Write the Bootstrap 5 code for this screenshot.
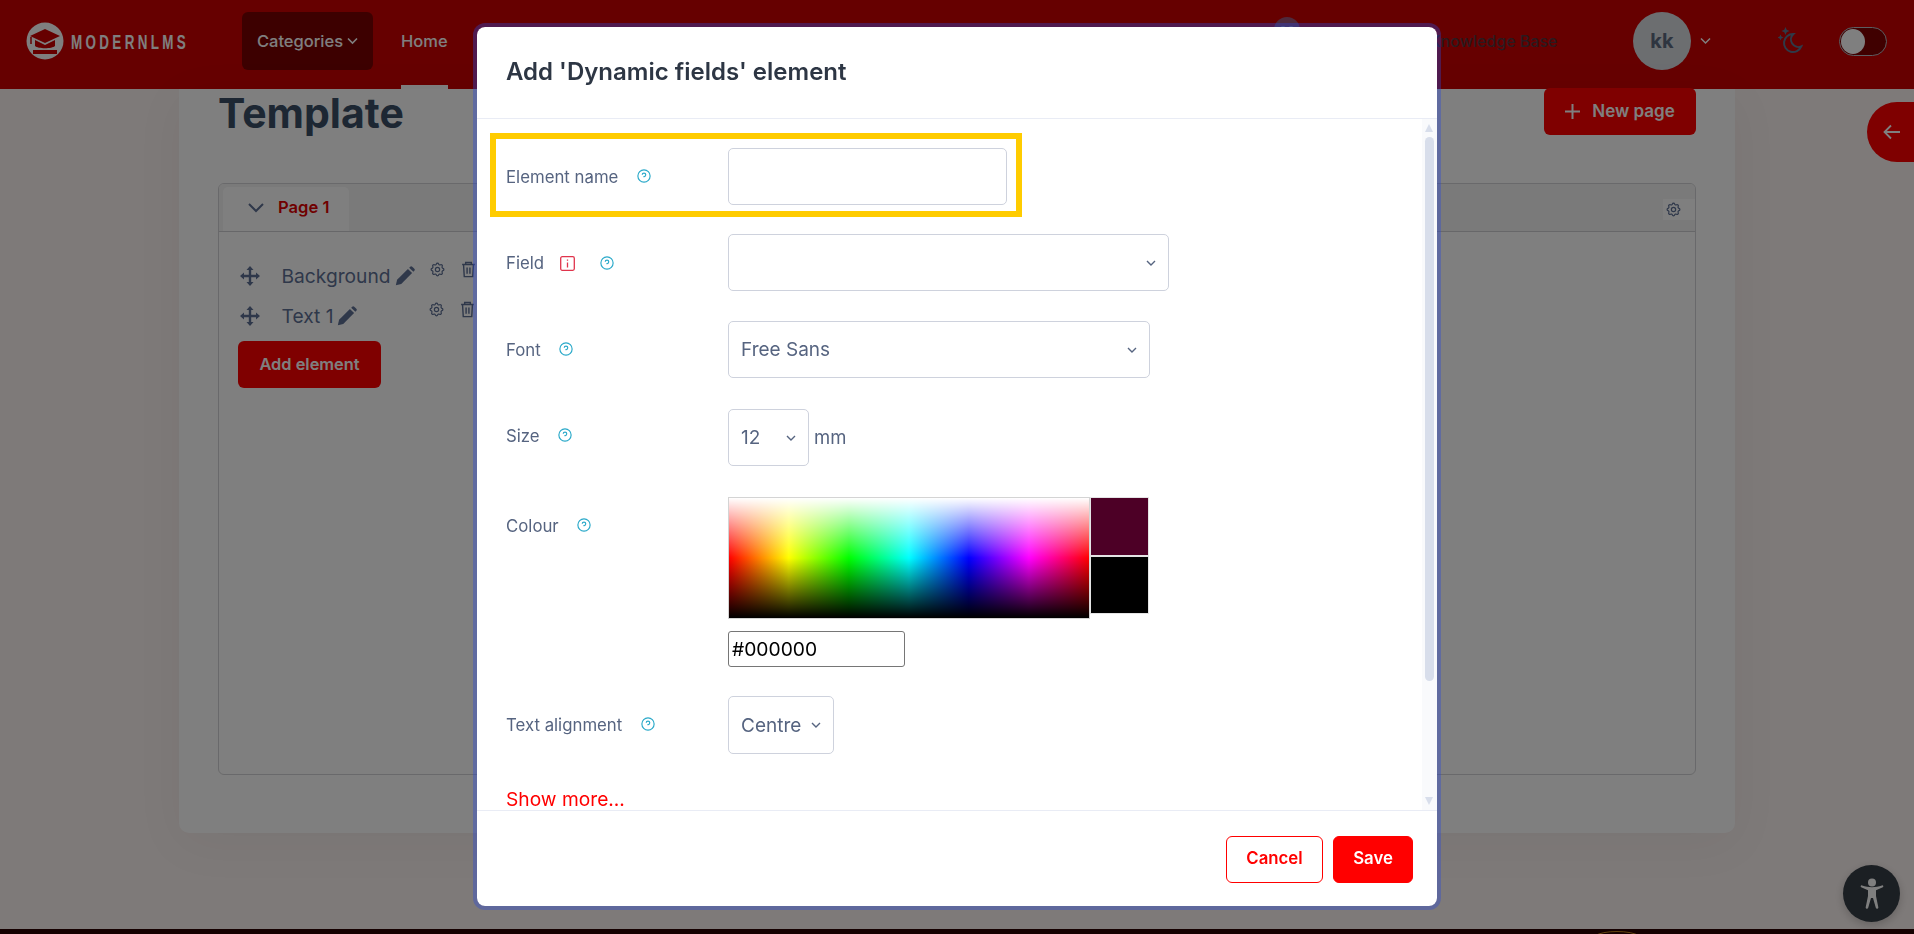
<!DOCTYPE html>
<html lang="en">
<head>
<meta charset="utf-8">
<title>Template</title>
<link href="https://cdn.jsdelivr.net/npm/bootstrap@5.3.0/dist/css/bootstrap.min.css" rel="stylesheet">
<style>
html,body{height:934px;overflow:hidden}
body{font-family:Inter,"Liberation Sans",sans-serif;background:#fcf4f2;color:#5e7095;font-size:16px}
svg{display:block;flex:none}
.top-bar{height:89px;background:#c00;padding:0 0 7px;flex-wrap:nowrap;justify-content:flex-start;align-items:center}
.brand-wrap{width:242px;padding-left:26px;gap:7px;margin:0}
.brand-word{font-family:"Liberation Sans",sans-serif;font-weight:700;font-size:21px;letter-spacing:5.2px;color:#fff;line-height:1;display:inline-block;transform:scaleX(.64);transform-origin:left center}
.cat-btn{width:131px;height:58px;background:#7a0000;border-radius:6px;color:#fff;gap:4px;font-size:16.5px;font-weight:500}
.home-link{color:#fff;font-size:16.5px;font-weight:500;height:89px;margin:0 0 -7px 28px;border-bottom:4px solid #fff;padding:0 0 3px}
.nav-bubble{margin-left:826px;margin-top:-22px}
.kb-link{color:#54353f;font-size:16px;font-weight:500;margin-left:130px}
.who{width:58px;height:58px;border-radius:50%;background:#d8dce1;color:#5c6a80;font-size:20px;font-weight:700;margin-left:75.5px}
.who-caret{margin-left:9px}
.moon-ic{margin-left:67px}
.mode-toggle{width:48px;height:29px;border:1px solid #b8bcc4;border-radius:15px;background:#800000;margin-left:33px;padding:1px}
.mode-knob{width:24px;height:25px;border-radius:50%;background:#fff}
.page-main{padding:0 179px;height:840px}
.sheet{height:744px;border:0;border-radius:0 0 10px 10px;padding:0 39px;box-shadow:0 10px 50px rgba(60,30,30,.05)}
.sheet-head{height:94px;align-items:flex-start}
.page-title{font-size:41px;font-weight:700;color:#3a4e66;line-height:48px;margin:0}
.btn-new{width:152px;height:47px;margin-top:-1px;background:#f00;color:#fff;font-weight:600;font-size:17px;border-radius:6px;gap:12px;border:0}
.page-box{height:592px;border:1px solid #d3d3d6;border-radius:6px;background:#fff}
.page-box-head{height:48px;background:#f4f4f4;border-bottom:1px solid #cfcfd3;border-radius:5px 5px 0 0;padding:3px 0 0 4px}
.page-tab{width:126px;height:44px;background:#fff;border-radius:5px 5px 0 0;padding:0 0 3px 25px;gap:14px;color:#e00000;font-weight:600;font-size:16.6px}
.gear-box{width:32px;height:21px;background:#fff;margin-bottom:11px;padding-left:2px}
.el-list{padding:24px 0 0 21px;width:280px}
.el-row{height:40px;margin:0}
.el-name{font-size:19.2px;color:#5e7095;margin-left:21.500px;margin-right:4px}
.el-tools{position:relative;top:-7px;gap:15px}
.el-tools-a{margin-left:14px}
.el-tools-b{margin-left:71px}
.btn-add{width:143px;height:47px;margin-top:5px;margin-left:-2px;background:#f00;color:#fff;font-weight:600;font-size:16.4px;border:0;border-radius:6px}
.foot-strip{height:5px;background:#2a0000;position:relative;overflow:hidden}
.foot-arc{position:absolute;left:1594px;top:1px}
.tab-back{position:fixed;right:0;top:102px;width:47px;height:60px;background:#f00;border-radius:30px 0 0 30px;padding-left:16px}
.a11y-btn{position:fixed;left:1843px;top:865px;width:57px;height:57px;background:#363e46;border-radius:50%;box-shadow:0 3px 10px rgba(0,0,0,.2)}
.dlg{max-width:none;width:968px;margin:23px auto 0}
.dlg-box{height:887px;border:4px solid rgba(42,72,219,.36);border-radius:12px;background:#fff;background-clip:padding-box}
.dlg-head{height:92px;padding:0 29px 2px;border-bottom:1px solid #e9ecf5;border-radius:8px 8px 0 0}
.dlg-title{font-size:24px;font-weight:600;color:#2d3644;margin:0}
.dlg-body{height:691px;flex:none;padding:29px 0 0 29px;overflow:hidden;position:relative}
.frow{position:relative;display:flex;align-items:flex-start}
.gap29{margin-bottom:29px}.gap30{margin-bottom:30px}.gap31{margin-bottom:31px}
.flabel{width:222px;flex:none;display:flex;align-items:center;padding-top:17.500px;height:41.500px;color:#566480;font-size:16.8px;margin:0}
.flabel-up{padding-top:15.500px;height:39.500px}
.help-mark{margin-left:18.500px;margin-top:-3px}
.flag-mark{margin-left:15.400px}
.help-after{margin-left:25.400px;margin-top:-2px}
.ctl{height:57px;border:1px solid #ced2dd;border-radius:5px;color:#566480;font-size:19px;padding:2px 0 0 12px;box-shadow:none;background-color:#fff}
.picker{background-image:url("data:image/svg+xml,%3csvg xmlns='http://www.w3.org/2000/svg' viewBox='0 0 10 10'%3e%3cpath fill='none' stroke='%23566480' stroke-width='1.4' d='M1 3l4 4 4-4'/%3e%3c/svg%3e");background-repeat:no-repeat;background-position:right 12px center;background-size:10px}
.w279{width:279px}.w441{width:441px}.w422{width:422px}.w81{width:81px}.w106{width:106px}.h58{height:58px}
.unit{margin-left:5px;font-size:18.500px;color:#566480;line-height:57px}
.spectrum{width:362px;height:122px;border:1px solid #d4d4d4;background:linear-gradient(to bottom,#fff 0,rgba(255,255,255,0) 50%,rgba(0,0,0,0) 50%,#000 100%),linear-gradient(to right,#f00,#ff0 16.6%,#0f0 33.3%,#0ff 50%,#00f 66.6%,#f0f 83.3%,#f00)}
.swatch{width:59px;border:1px solid #e4e4e4}
.swatch-a{height:59px;background:#4d0026}
.swatch-b{height:58px;background:#000}
.hex-in{display:block;width:177px;height:36px;margin-top:12px;border:1px solid #767676;border-radius:3px;font-size:19.300px;color:#000;padding:0 3px;font-family:Inter,sans-serif}
.show-more{color:#f00;font-size:19.200px;line-height:24px;margin-top:33px;display:block;text-decoration:none}
.hl-box{position:absolute;left:-16px;top:-15px;width:532px;height:84px;border:6px solid #fc0;pointer-events:none}
.sb-track{position:absolute;right:0;top:0;bottom:0;width:15px;background:#f9fafc}
.sb-up,.sb-down{position:absolute;left:3px;width:0;height:0;border-left:4.5px solid transparent;border-right:4.5px solid transparent}
.sb-up{top:5px;border-bottom:8px solid #d8deeb}
.sb-down{bottom:5px;border-top:8px solid #d8deeb}
.sb-thumb{position:absolute;left:3px;top:18px;width:9px;height:544px;border-radius:5px;background:#d8deeb}
.dlg-foot{height:96px;padding:1px 24px 0;border-top:1px solid #e9ecf5;gap:10px}
.btn-cancel,.btn-save{height:47px;font-weight:600;font-size:16.800px;border-radius:6px;padding:0;margin:0}
.btn-cancel{width:97px;border:1px solid #f00;color:#f00;background:#fff}
.btn-save{width:80px;border:1px solid #f00;color:#fff;background:#f00}
</style>
</head>
<body>
<nav class="navbar top-bar">
  <a class="navbar-brand d-flex align-items-center brand-wrap" href="#">
    <svg width="38" height="38" viewBox="0 0 38 38"><circle cx="19" cy="19" r="18.5" fill="#fff"/><path d="M19 7L4 14l15 7 15-7z" fill="#c00"/><path d="M9 18v6c3 3 17 3 20 0v-6l-10 5z" fill="#c00"/><path d="M5 15v7" stroke="#c00" stroke-width="1.5"/><rect x="7" y="28" width="24" height="4" fill="#c00"/></svg>
    <span class="brand-word">MODERNLMS</span>
  </a>
  <div class="cat-btn d-flex align-items-center justify-content-center">Categories
    <svg width="11" height="8" viewBox="0 0 11 8"><path d="M1 1.5l4.5 4.5L10 1.5" fill="none" stroke="#fff" stroke-width="1.6"/></svg>
  </div>
  <a class="home-link d-flex align-items-center text-decoration-none" href="#">Home</a>
  <svg class="nav-bubble" width="26" height="26" viewBox="0 0 26 26"><circle cx="13" cy="13" r="13" fill="#9e5478"/><circle cx="9" cy="13" r="3" fill="none" stroke="#b8c2dc" stroke-width="1.4"/><circle cx="17" cy="13" r="3" fill="none" stroke="#b8c2dc" stroke-width="1.4"/></svg>
  <span class="kb-link">Knowledge Base</span>
  <div class="who d-flex align-items-center justify-content-center">kk</div>
  <svg class="who-caret" width="11" height="8" viewBox="0 0 11 8"><path d="M1 1.5l4.5 4.5L10 1.5" fill="none" stroke="#fff" stroke-width="1.5"/></svg>
  <svg class="moon-ic" width="28" height="28" viewBox="0 0 28 28" fill="#5e7490"><path d="M15 7c.132 0 .263 0 .393 0a7.500 7.500 0 0 0 7.920 12.446a9 9 0 1 1-8.313-12.454z" fill="none" stroke="#5e7490" stroke-width="2"/><path d="M7.500 0l1.200 2.800L11.500 4 8.700 5.200 7.500 8 6.300 5.200 3.500 4l2.800-1.200z"/><path d="M2.500 7.500l.9 2.100 2.100.9-2.100.9-.9 2.100-.9-2.100-2.100-.9 2.100-.9z"/></svg>
  <div class="mode-toggle"><div class="mode-knob"></div></div>
</nav>

<main class="page-main">
  <div class="card sheet">
    <div class="d-flex justify-content-between sheet-head">
      <h1 class="page-title">Template</h1>
      <button class="btn d-flex align-items-center justify-content-center btn-new" type="button">
        <svg width="15" height="15" viewBox="0 0 15 15"><path d="M7.500 0v15M0 7.500h15" stroke="#fff" stroke-width="2"/></svg>New page
      </button>
    </div>
    <div class="page-box">
      <div class="d-flex justify-content-between align-items-end page-box-head">
        <div class="d-flex align-items-center page-tab">
          <svg width="16" height="10" viewBox="0 0 16 10"><path d="M1 1l7 7 7-7" fill="none" stroke="#5e7095" stroke-width="2"/></svg>Page 1
        </div>
        <div class="d-flex align-items-center gear-box">
          <svg width="17" height="17" viewBox="0 0 24 24" fill="none" stroke="#5e7095" stroke-width="1.700"><path d="M10.325 4.317c.426-1.756 2.924-1.756 3.35 0a1.724 1.724 0 0 0 2.573 1.066c1.543-.94 3.31.826 2.37 2.37a1.724 1.724 0 0 0 1.065 2.572c1.756.426 1.756 2.924 0 3.35a1.724 1.724 0 0 0-1.066 2.573c.94 1.543-.826 3.31-2.37 2.37a1.724 1.724 0 0 0-2.572 1.065c-.426 1.756-2.924 1.756-3.35 0a1.724 1.724 0 0 0-2.573-1.066c-1.543.94-3.31-.826-2.37-2.37a1.724 1.724 0 0 0-1.065-2.572c-1.756-.426-1.756-2.924 0-3.350a1.724 1.724 0 0 0 1.066-2.573c-.94-1.543.826-3.310 2.370-2.370.996.608 2.296.07 2.572-1.065z"/><circle cx="12" cy="12" r="3"/></svg>
        </div>
      </div>
      <div class="el-list">
        <div class="d-flex align-items-center el-row">
          <svg width="20" height="20" viewBox="0 0 20 20" fill="#5e7095"><path d="M10 0l3.500 4h-2.300v4.800H16V6.500l4 3.500-4 3.500v-2.300h-4.800V16h2.300L10 20l-3.500-4h2.300v-4.800H4v2.300L0 10l4-3.500v2.300h4.800V4H6.500z"/></svg>
          <span class="el-name">Background</span>
          <svg width="20" height="20" viewBox="0 0 24 24" fill="#5e7095"><path d="M1 23l1.500-6.500L15.500 3.500l5 5L7.500 21.500z"/><path d="M17 2l1.200-1.200a1.800 1.800 0 0 1 2.500 0l2.500 2.500a1.800 1.800 0 0 1 0 2.500L22 7z"/></svg>
          <div class="d-flex el-tools el-tools-a">
            <svg width="17" height="17" viewBox="0 0 24 24" fill="none" stroke="#5e7095" stroke-width="1.700"><path d="M10.325 4.317c.426-1.756 2.924-1.756 3.35 0a1.724 1.724 0 0 0 2.573 1.066c1.543-.94 3.31.826 2.37 2.37a1.724 1.724 0 0 0 1.065 2.572c1.756.426 1.756 2.924 0 3.35a1.724 1.724 0 0 0-1.066 2.573c.94 1.543-.826 3.31-2.37 2.37a1.724 1.724 0 0 0-2.572 1.065c-.426 1.756-2.924 1.756-3.35 0a1.724 1.724 0 0 0-2.573-1.066c-1.543.94-3.31-.826-2.37-2.37a1.724 1.724 0 0 0-1.065-2.572c-1.756-.426-1.756-2.924 0-3.350a1.724 1.724 0 0 0 1.066-2.573c-.94-1.543.826-3.310 2.370-2.370.996.608 2.296.07 2.572-1.065z"/><circle cx="12" cy="12" r="3"/></svg>
            <svg width="15" height="17" viewBox="0 0 20 24" fill="none" stroke="#5e7095" stroke-width="2"><path d="M1 5h18M6 5V2h8v3M3 5l1 17h12l1-17M8 9v9M12 9v9"/></svg>
          </div>
        </div>
        <div class="d-flex align-items-center el-row">
          <svg width="20" height="20" viewBox="0 0 20 20" fill="#5e7095"><path d="M10 0l3.500 4h-2.300v4.800H16V6.500l4 3.500-4 3.500v-2.300h-4.800V16h2.300L10 20l-3.500-4h2.300v-4.800H4v2.300L0 10l4-3.500v2.300h4.800V4H6.500z"/></svg>
          <span class="el-name">Text 1</span>
          <svg width="20" height="20" viewBox="0 0 24 24" fill="#5e7095"><path d="M1 23l1.500-6.500L15.500 3.500l5 5L7.500 21.500z"/><path d="M17 2l1.200-1.200a1.800 1.800 0 0 1 2.500 0l2.500 2.500a1.800 1.800 0 0 1 0 2.500L22 7z"/></svg>
          <div class="d-flex el-tools el-tools-b">
            <svg width="17" height="17" viewBox="0 0 24 24" fill="none" stroke="#5e7095" stroke-width="1.700"><path d="M10.325 4.317c.426-1.756 2.924-1.756 3.35 0a1.724 1.724 0 0 0 2.573 1.066c1.543-.94 3.31.826 2.37 2.37a1.724 1.724 0 0 0 1.065 2.572c1.756.426 1.756 2.924 0 3.35a1.724 1.724 0 0 0-1.066 2.573c.94 1.543-.826 3.31-2.37 2.37a1.724 1.724 0 0 0-2.572 1.065c-.426 1.756-2.924 1.756-3.35 0a1.724 1.724 0 0 0-2.573-1.066c-1.543.94-3.31-.826-2.37-2.37a1.724 1.724 0 0 0-1.065-2.572c-1.756-.426-1.756-2.924 0-3.350a1.724 1.724 0 0 0 1.066-2.573c-.94-1.543.826-3.310 2.370-2.370.996.608 2.296.07 2.572-1.065z"/><circle cx="12" cy="12" r="3"/></svg>
            <svg width="15" height="17" viewBox="0 0 20 24" fill="none" stroke="#5e7095" stroke-width="2"><path d="M1 5h18M6 5V2h8v3M3 5l1 17h12l1-17M8 9v9M12 9v9"/></svg>
          </div>
        </div>
        <button class="btn btn-add" type="button">Add element</button>
      </div>
    </div>
  </div>
</main>
<div class="foot-strip"><svg class="foot-arc" width="46" height="6" viewBox="0 0 46 6"><path d="M1 6C8 0 38 0 45 6" fill="none" stroke="#c98a20" stroke-width="1"/></svg></div>

<div class="tab-back d-flex align-items-center">
  <svg width="18" height="16" viewBox="0 0 18 16" fill="none" stroke="#fff" stroke-width="1.800"><path d="M17 8H2M8 1.500L1.500 8 8 14.500"/></svg>
</div>
<div class="a11y-btn d-flex align-items-center justify-content-center">
  <svg width="24" height="32" viewBox="0 0 24 32" fill="#fff"><circle cx="12" cy="4.500" r="4"/><path d="M1.200 9.200c-1.100-.5-.4-2.300.9-1.800 6.500 2.300 13.300 2.300 19.800 0 1.300-.5 2 1.300.9 1.800l-6.800 3v5.800l2.300 11.200c.3 1.600-2 2.200-2.500.6L13 20h-2l-2.800 9.800c-.5 1.600-2.800 1-2.500-.6L8 18v-5.800z"/></svg>
</div>

<div class="modal-backdrop fade show"></div>
<div class="modal fade show d-block" tabindex="-1">
  <div class="modal-dialog dlg">
    <div class="modal-content dlg-box">
      <div class="modal-header dlg-head">
        <h5 class="modal-title dlg-title">Add 'Dynamic fields' element</h5>
      </div>
      <div class="modal-body dlg-body">
        <div class="frow gap29">
          <div class="hl-box"></div>
          <label class="flabel">Element name
            <svg class="help-mark" width="14" height="14" viewBox="0 0 24 24" fill="none" stroke="#2aa9c9" stroke-width="2"><circle cx="12" cy="12" r="10.500"/><path d="M12 17.500v.01M12 14v-1a3 3 0 1 0-3-3"/></svg>
          </label>
          <input class="form-control ctl w279" type="text">
        </div>
        <div class="frow gap30">
          <label class="flabel">Field
            <svg class="flag-mark" width="15" height="15" viewBox="0 0 15 15" fill="none" stroke="#e0344c" stroke-width="1.300"><rect x=".7" y=".7" width="13.600" height="13.600" rx="1.500"/><path d="M7.500 6.500v5M7.500 3.500v1.300"/></svg>
            <svg class="help-after" width="14" height="14" viewBox="0 0 24 24" fill="none" stroke="#2aa9c9" stroke-width="2"><circle cx="12" cy="12" r="10.500"/><path d="M12 17.500v.01M12 14v-1a3 3 0 1 0-3-3"/></svg>
          </label>
          <select class="form-select picker ctl w441"><option></option></select>
        </div>
        <div class="frow gap31">
          <label class="flabel">Font
            <svg class="help-mark" width="14" height="14" viewBox="0 0 24 24" fill="none" stroke="#2aa9c9" stroke-width="2"><circle cx="12" cy="12" r="10.500"/><path d="M12 17.500v.01M12 14v-1a3 3 0 1 0-3-3"/></svg>
          </label>
          <select class="form-select picker ctl w422"><option>Free Sans</option></select>
        </div>
        <div class="frow gap31">
          <label class="flabel flabel-up">Size
            <svg class="help-mark" width="14" height="14" viewBox="0 0 24 24" fill="none" stroke="#2aa9c9" stroke-width="2"><circle cx="12" cy="12" r="10.500"/><path d="M12 17.500v.01M12 14v-1a3 3 0 1 0-3-3"/></svg>
          </label>
          <select class="form-select picker ctl w81"><option>12</option></select>
          <span class="unit">mm</span>
        </div>
        <div class="frow gap29">
          <label class="flabel">Colour
            <svg class="help-mark" width="14" height="14" viewBox="0 0 24 24" fill="none" stroke="#2aa9c9" stroke-width="2"><circle cx="12" cy="12" r="10.500"/><path d="M12 17.500v.01M12 14v-1a3 3 0 1 0-3-3"/></svg>
          </label>
          <div>
            <div class="d-flex">
              <div class="spectrum"></div>
              <div><div class="swatch swatch-a"></div><div class="swatch swatch-b"></div></div>
            </div>
            <input class="hex-in" type="text" value="#000000">
          </div>
        </div>
        <div class="frow">
          <label class="flabel">Text alignment
            <svg class="help-mark" width="14" height="14" viewBox="0 0 24 24" fill="none" stroke="#2aa9c9" stroke-width="2"><circle cx="12" cy="12" r="10.500"/><path d="M12 17.500v.01M12 14v-1a3 3 0 1 0-3-3"/></svg>
          </label>
          <select class="form-select picker ctl w106 h58"><option>Centre</option></select>
        </div>
        <a class="show-more" href="#">Show more...</a>
        <div class="sb-track"><span class="sb-up"></span><span class="sb-thumb"></span><span class="sb-down"></span></div>
      </div>
      <div class="modal-footer dlg-foot">
        <button class="btn btn-cancel" type="button">Cancel</button>
        <button class="btn btn-save" type="button">Save</button>
      </div>
    </div>
  </div>
</div>
<script src="https://cdn.jsdelivr.net/npm/bootstrap@5.3.0/dist/js/bootstrap.bundle.min.js"></script>
</body>
</html>
